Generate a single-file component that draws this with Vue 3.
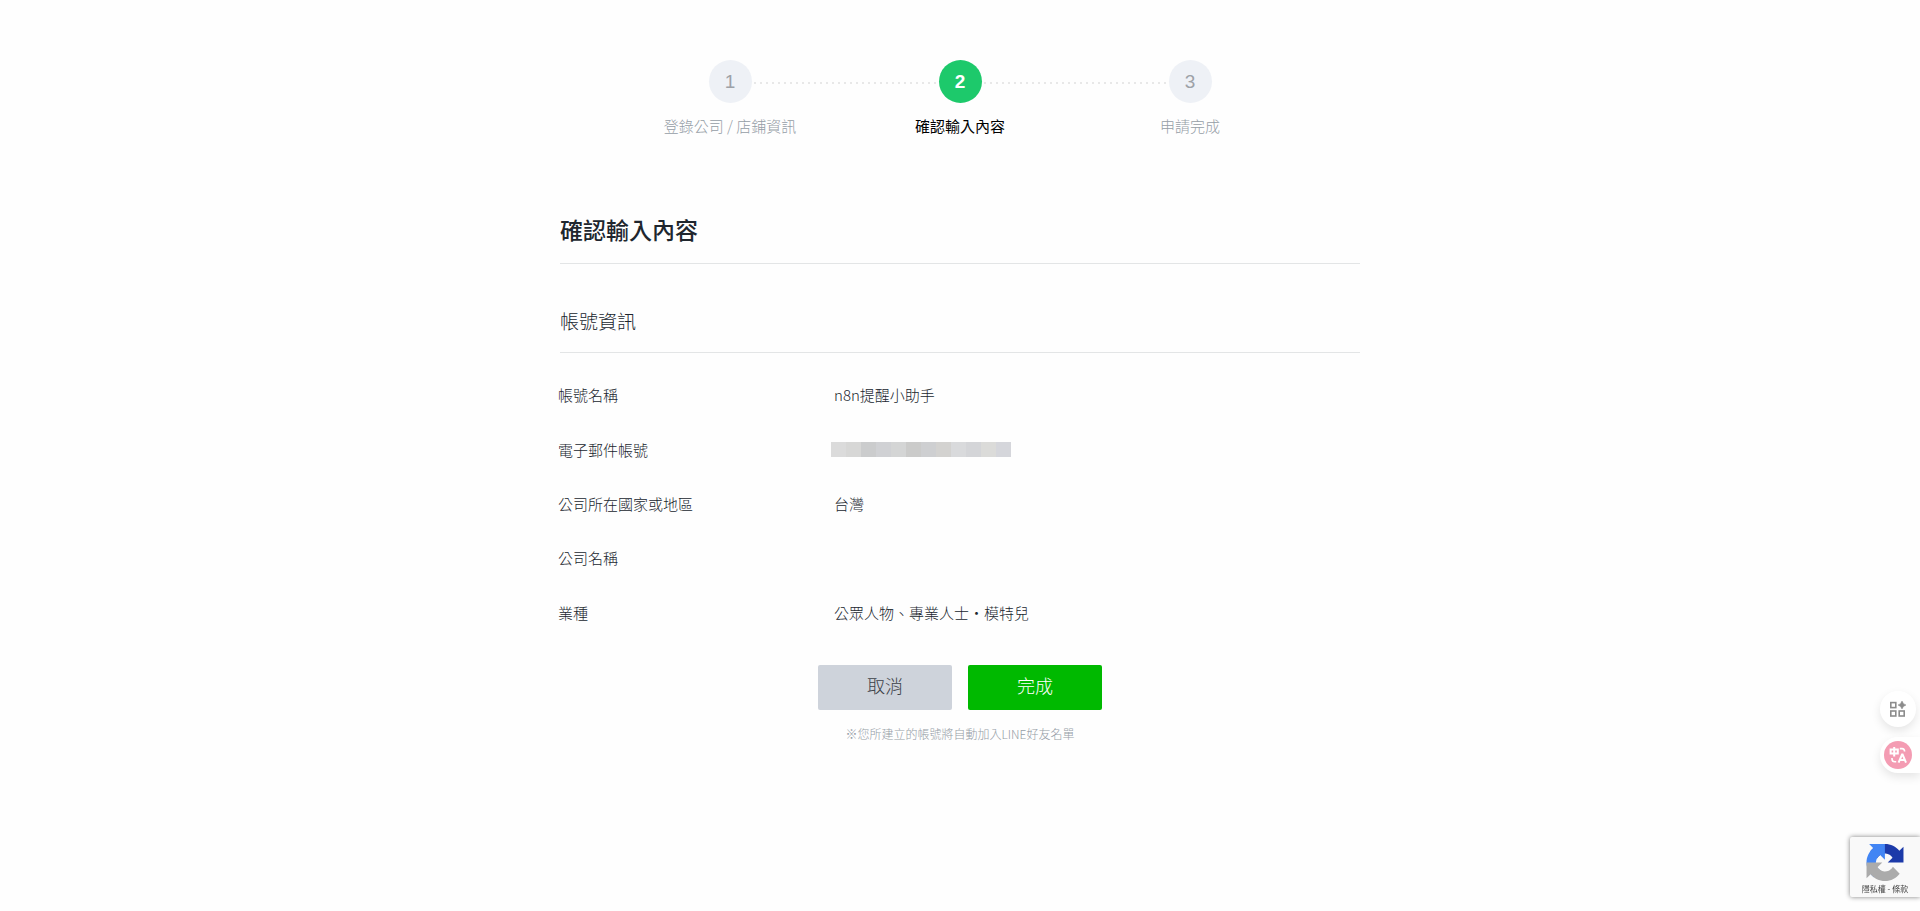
<script setup>
const steps = [
  { n: 1, label: '登錄公司 / 店鋪資訊', active: false },
  { n: 2, label: '確認輸入內容', active: true },
  { n: 3, label: '申請完成', active: false },
]
const rows = [
  { label: '帳號名稱', value: 'n8n提醒小助手' },
  { label: '電子郵件帳號', masked: true },
  { label: '公司所在國家或地區', value: '台灣' },
  { label: '公司名稱', value: '' },
  { label: '業種', value: '公眾人物、專業人士・模特兒' },
]
const mask = ['#dbdbdb', '#d7d7d6', '#cbcccd', '#d0d1d4', '#d4d5d5', '#cbcbca', '#cecfd1', '#d3d2d0', '#d9dadc', '#d4d5d8', '#dbdbd9', '#d5d6db']
</script>

<template>
  <main class="page">
    <ol class="steps">
      <li v-for="s in steps" :key="s.n" class="step" :class="{ active: s.active }">
        <span class="num">{{ s.n }}</span>
        <span class="step-label">{{ s.label }}</span>
      </li>
    </ol>

    <h1 class="title">確認輸入內容</h1>
    <h2 class="subtitle">帳號資訊</h2>

    <table class="info">
      <tbody>
        <tr v-for="r in rows" :key="r.label">
          <th scope="row">{{ r.label }}</th>
          <td>
            <span v-if="r.masked" class="mask">
              <i v-for="(c, i) in mask" :key="i" :style="{ background: c }"></i>
            </span>
            <template v-else>{{ r.value }}</template>
          </td>
        </tr>
      </tbody>
    </table>

    <div class="actions">
      <button type="button" class="btn cancel">取消</button>
      <button type="button" class="btn done">完成</button>
    </div>
    <p class="note">※您所建立的帳號將自動加入LINE好友名單</p>

    <div class="float-tools">
      <button type="button" class="tool round" aria-label="Apps">
        <svg width="16" height="16" viewBox="0 0 16 16" fill="none" stroke="#8c8c8c" stroke-width="1.6">
          <rect x="0.8" y="1.6" width="5" height="5" />
          <rect x="0.8" y="10" width="5" height="5" />
          <rect x="9.2" y="10" width="5" height="5" />
          <path d="M12 0 Q12.9 3.1 16 4 Q12.9 4.9 12 8 Q11.1 4.9 8 4 Q11.1 3.1 12 0Z" fill="#8c8c8c" stroke="#8c8c8c" stroke-width="0.5" />
        </svg>
      </button>
      <button type="button" class="tool tab" aria-label="Translate">
        <svg width="28" height="28" viewBox="0 0 28 28" fill="none" stroke="#fff" stroke-width="2">
          <circle cx="14" cy="14" r="14" fill="#f49cb3" stroke="none" />
          <path d="M6.6 8.4h7.2v4H6.6zM10.2 6v9.6" />
          <path d="M15.8 7.6h2.2q2.6 0 2.6 3M8 17v1q0 2.8 2.8 2.8h1.4" stroke-width="1.6" />
          <path d="M14.6 21.6L18 13.6h.6l3.4 8M16 19h4.8" />
        </svg>
      </button>
    </div>

    <aside class="captcha">
      <svg width="38" height="38" viewBox="0 0 64 64">
        <path fill="#1c3aa9" d="M64 31.955l-.033-1.37V4.687l-7.16 7.16C50.948 4.674 42.033.093 32.05.093c-10.4 0-19.622 4.96-25.458 12.64l11.736 11.86a15.55 15.55 0 0 1 4.754-5.334c2.05-1.6 4.952-2.906 8.968-2.906.485 0 .86.057 1.135.163 4.976.393 9.288 3.14 11.828 7.124l-8.307 8.307L64 31.953" />
        <path fill="#4285f4" d="M31.862.094l-1.37.033H4.594l7.16 7.16C4.58 13.147 0 22.06 0 32.046c0 10.4 4.96 19.622 12.64 25.458L24.5 45.768a15.55 15.55 0 0 1-5.334-4.754c-1.6-2.05-2.906-4.952-2.906-8.968 0-.485.057-.86.163-1.135.393-4.976 3.14-9.288 7.124-11.828l8.307 8.307L31.86.095" />
        <path fill="#ababab" d="M.001 32.045l.033 1.37v25.898l7.16-7.16c5.86 7.173 14.774 11.754 24.76 11.754 10.4 0 19.622-4.96 25.458-12.64l-11.736-11.86a15.55 15.55 0 0 1-4.754 5.334c-2.05 1.6-4.952 2.906-8.968 2.906-.485 0-.86-.057-1.135-.163-4.976-.393-9.288-3.14-11.828-7.124l8.307-8.307c-10.522.04-22.4.066-27.295-.005" />
      </svg>
      <p class="terms"><a href="#privacy">隱私權</a> - <a href="#terms">條款</a></p>
    </aside>
  </main>
</template>

<style>
body {
  background: #fefefe;
}
</style>

<style scoped>
.page {
  max-width: 800px;
  margin: 0 auto;
  padding-top: 60px;
  font-family: "Noto Sans CJK TC", sans-serif;
  font-size: 15px;
  font-weight: 300;
  line-height: 22px;
  color: #20262e;
}
.steps {
  display: flex;
  justify-content: center;
  margin: 0;
  padding: 0;
  list-style: none;
}
.step {
  position: relative;
  display: flex;
  flex-direction: column;
  align-items: center;
  gap: 12px;
  width: 230px;
  color: #959da6;
}
.step + .step::before {
  content: "";
  position: absolute;
  top: 22px;
  right: 139px;
  left: -91px;
  height: 2px;
  background: repeating-linear-gradient(90deg, #e8e8e8 0 2px, transparent 2px 6px);
}
.num {
  width: 43px;
  border-radius: 50%;
  background: #eef1f6;
  color: #9da1a7;
  font: 19px/44px "Liberation Sans", Arial, sans-serif;
  height: 43px;
  text-align: center;
}
.step.active {
  color: #000;
  font-weight: 400;
}
.active .num {
  background: #1dc96b;
  color: #fff;
  font-weight: 700;
}
.title,
.subtitle {
  margin: 0;
  border-bottom: 1px solid #e3e5e6;
}
.title {
  margin-top: 75px;
  padding-bottom: 17px;
  font-size: 23px;
  font-weight: 500;
  line-height: 34px;
}
.subtitle {
  margin-top: 43px;
  padding-bottom: 17px;
  font-size: 19px;
  font-weight: 300;
  line-height: 28px;
}
.info {
  width: 100%;
  height: 272px;
  margin: 15px 0 0 -2px;
  border-collapse: collapse;
}
.info th {
  width: 276px;
  font-weight: 300;
  text-align: left;
}
.info th,
.info td {
  padding: 0;
}
.mask {
  display: flex;
  margin-left: -3px;
}
.mask i {
  width: 15px;
  height: 15px;
}
.actions {
  display: flex;
  justify-content: center;
  gap: 16px;
  margin-top: 25px;
}
.btn {
  width: 134px;
  height: 45px;
  padding: 0 0 5px;
  border: 0;
  border-radius: 2px;
  font: inherit;
  font-size: 18px;
}
.cancel {
  background: #ced3db;
  color: #3c4148;
}
.done {
  background: #00b900;
  color: #fff;
}
.note {
  margin: 13px 0 0;
  font-size: 12px;
  text-align: center;
  color: #959da6;
}
.float-tools {
  position: fixed;
  right: 0;
  bottom: 138px;
  display: flex;
  flex-direction: column;
  align-items: flex-end;
  gap: 10px;
}
.tool {
  display: flex;
  align-items: center;
  height: 36px;
  padding: 0;
  border: 0;
  background: #fff;
  box-shadow: 0 4px 10px rgba(0, 0, 0, 0.1);
}
.round {
  justify-content: center;
  width: 36px;
  margin-right: 4px;
  border-radius: 50%;
}
.tab {
  width: 40px;
  padding-left: 4px;
  border-radius: 18px 0 0 18px;
}
.captcha {
  position: fixed;
  right: 0;
  bottom: 14px;
  display: flex;
  flex-direction: column;
  align-items: center;
  width: 70px;
  height: 60px;
  padding-top: 7px;
  box-sizing: border-box;
  border-radius: 2px 0 0 2px;
  background: #f9f9f9;
  box-shadow: 0 0 5px #808080;
}
.terms {
  margin: 0;
  font-size: 8px;
  font-weight: 400;
  line-height: 16px;
  color: #444;
  white-space: nowrap;
}
.terms a {
  color: inherit;
  text-decoration: none;
}
</style>
